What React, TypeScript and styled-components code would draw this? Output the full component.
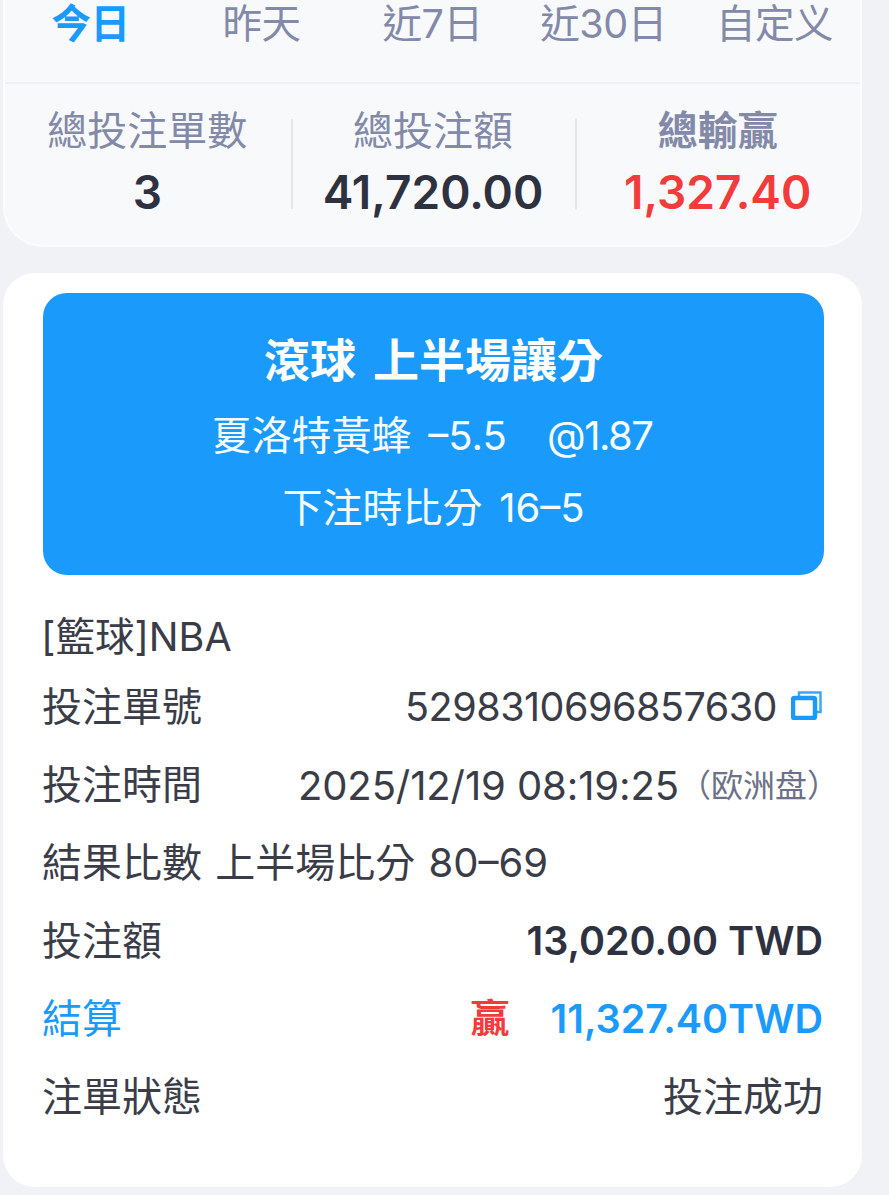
import * as React from "react";
import styled, { createGlobalStyle } from "styled-components";

const fontStack = `Inter, "Noto Sans CJK TC", "Noto Sans CJK SC", sans-serif`;

const GlobalStyle = createGlobalStyle`
  html, body {
    margin: 0;
    padding: 0;
    width: 889px;
    height: 1195px;
    overflow: hidden;
    background: #f1f2f6;
    font-family: ${fontStack};
  }
`;

const tabs = ["今日", "昨天", "近7日", "近30日", "自定义"];

const stats = [
  { label: "總投注單數", value: "3" },
  { label: "總投注額", value: "41,720.00" },
  { label: "總輸贏", value: "1,327.40", win: true },
];

const CopyIcon = () => (
  <CopySvg width="31" height="29" viewBox="0 0 31 29" fill="none">
    <path d="M8 5V1.5H29.5V21H25" stroke="#3fa6f6" strokeWidth="2.5" />
    <rect x="2" y="7" width="22" height="20" rx="1.5" stroke="#1a9bfc" strokeWidth="4.5" />
  </CopySvg>
);

export default function App() {
  return (
    <Page>
      <GlobalStyle />
      <SummaryCard>
        <Tabs>
          {tabs.map((t, i) => (
            <Tab key={t} $active={i === 0}>
              {t}
            </Tab>
          ))}
        </Tabs>
        <Stats>
          {stats.map((s) => (
            <Stat key={s.label}>
              <StatLabel $bold={s.win}>{s.label}</StatLabel>
              <StatValue $win={s.win}>{s.value}</StatValue>
            </Stat>
          ))}
        </Stats>
      </SummaryCard>

      <OrderCard>
        <Banner>
          <BannerTitle>滾球 上半場讓分</BannerTitle>
          <BannerLine>
            夏洛特黃蜂 –5.5 &nbsp;&nbsp;<Odds>@1.87</Odds>
          </BannerLine>
          <BannerLine>下注時比分 16–5</BannerLine>
        </Banner>
        <League>[籃球]NBA</League>
        <Row>
          <Label>投注單號</Label>
          <RowValue>
            <Digits>5298310696857630</Digits>
            <CopyIcon />
          </RowValue>
        </Row>
        <Row>
          <Label>投注時間</Label>
          <RowValue>
            <DateText>2025/12/19 08:19:25</DateText>
            <Market>（欧洲盘）</Market>
          </RowValue>
        </Row>
        <Row>
          <ResultText>結果比數 上半場比分 80–69</ResultText>
        </Row>
        <Row>
          <Label>投注額</Label>
          <RowValue>
            <Strong>13,020.00 TWD</Strong>
          </RowValue>
        </Row>
        <Row $blue>
          <Label>結算</Label>
          <RowValue>
            <WinMark>贏</WinMark>
            <Strong $blue>11,327.40TWD</Strong>
          </RowValue>
        </Row>
        <Row>
          <Label>注單狀態</Label>
          <Label>投注成功</Label>
        </Row>
      </OrderCard>
    </Page>
  );
}

const Page = styled.div`
  width: 889px;
  height: 1195px;
  box-sizing: border-box;
  padding: 0 27px 0 3px;
  display: flex;
  flex-direction: column;
  gap: 26px;
`;

const SummaryCard = styled.section`
  height: 247px;
  box-sizing: border-box;
  background: #f8f9fb;
  border: 2px solid #fbfcfd;
  border-top: 0;
  border-radius: 0 0 40px 40px;
  display: flex;
  flex-direction: column;
`;

const Tabs = styled.div`
  height: 84px;
  flex: none;
  box-sizing: border-box;
  display: grid;
  grid-template-columns: repeat(5, 171px);
  padding-bottom: 36px;
  border-bottom: 2px solid #eef0f4;
`;

const Tab = styled.div<{ $active?: boolean }>`
  font-size: 39.5px;
  line-height: 48px;
  text-align: center;
  letter-spacing: -0.5px;
  color: ${(p) => (p.$active ? "#1a9bfc" : "#8389a8")};
  font-weight: ${(p) => (p.$active ? 700 : 400)};
`;

const Stats = styled.div`
  display: grid;
  grid-template-columns: repeat(3, 1fr);
  padding: 21px 0 0 1px;
`;

const Stat = styled.div`
  height: 90px;
  margin-top: 14px;
  padding-right: 2px;
  display: flex;
  flex-direction: column;
  align-items: center;
  justify-content: space-between;
  & + & {
    border-left: 2px solid #e4e6ec;
  }
`;

const StatLabel = styled.div<{ $bold?: boolean }>`
  margin-top: -15px;
  font-size: 40px;
  line-height: 54px;
  color: #8389a8;
  font-weight: ${(p) => (p.$bold ? 700 : 400)};
`;

const StatValue = styled.div<{ $win?: boolean }>`
  margin-bottom: -10px;
  font-size: 46px;
  line-height: 54px;
  font-weight: 600;
  color: ${(p) => (p.$win ? "#f23c3c" : "#2e3140")};
`;

const OrderCard = styled.section`
  flex: none;
  height: 914px;
  box-sizing: border-box;
  padding: 20px 38px 0 40px;
  background: #ffffff;
  border-radius: 32px;
  color: #3a3c48;
  font-size: 40px;
`;

const Banner = styled.div`
  height: 282px;
  box-sizing: border-box;
  padding-top: 36px;
  border-radius: 24px;
  background: #1a9bfc;
  color: #f6fbff;
  display: flex;
  flex-direction: column;
  align-items: center;
  gap: 18px;
`;

const BannerTitle = styled.div`
  font-size: 46px;
  line-height: 62px;
  font-weight: 700;
  word-spacing: 6px;
  color: #ffffff;
`;

const BannerLine = styled.div`
  font-size: 40px;
  line-height: 54px;
  font-weight: 400;
  word-spacing: 5.5px;
`;

const Odds = styled.span`
  margin: 0 3px 0 -10px;
  letter-spacing: -1.5px;
`;

const League = styled.div`
  height: 61px;
  margin: 30px 1px 0 -2px;
  font-size: 39.5px;
  line-height: 64px;
`;

const Row = styled.div<{ $blue?: boolean }>`
  height: 78px;
  margin: 0 1px 0 -1px;
  display: flex;
  align-items: center;
  justify-content: space-between;
  color: ${(p) => (p.$blue ? "#1a9bfc" : "#3a3c48")};
`;

/* CJK text sits lower than the Latin digits in Inter's line box, so the two get opposite nudges */
const Label = styled.span`
  padding-bottom: 2px;
`;

const ResultText = styled.span`
  padding-bottom: 2px;
  word-spacing: 2px;
`;

const RowValue = styled.span`
  padding-top: 4px;
  display: flex;
  align-items: center;
  gap: 15px;
`;

const Digits = styled.span`
  font-size: 39.5px;
  letter-spacing: -0.5px;
`;

const CopySvg = styled.svg`
  margin: 0 1px 4px -1px;
`;

const DateText = styled.span`
  letter-spacing: -0.1px;
`;

const Market = styled.span`
  padding-bottom: 4px;
  font-size: 32px;
  color: #6d7186;
  margin-left: -15px;
  margin-right: -16px;
`;

const Strong = styled.span<{ $blue?: boolean }>`
  font-size: 39.5px;
  font-weight: 600;
  color: ${(p) => (p.$blue ? "#1a9bfc" : "#2e3140")};
`;

const WinMark = styled.span`
  padding-bottom: 8px;
  font-size: 39px;
  font-weight: 700;
  color: #f23c3c;
  margin-right: 26px;
`;
